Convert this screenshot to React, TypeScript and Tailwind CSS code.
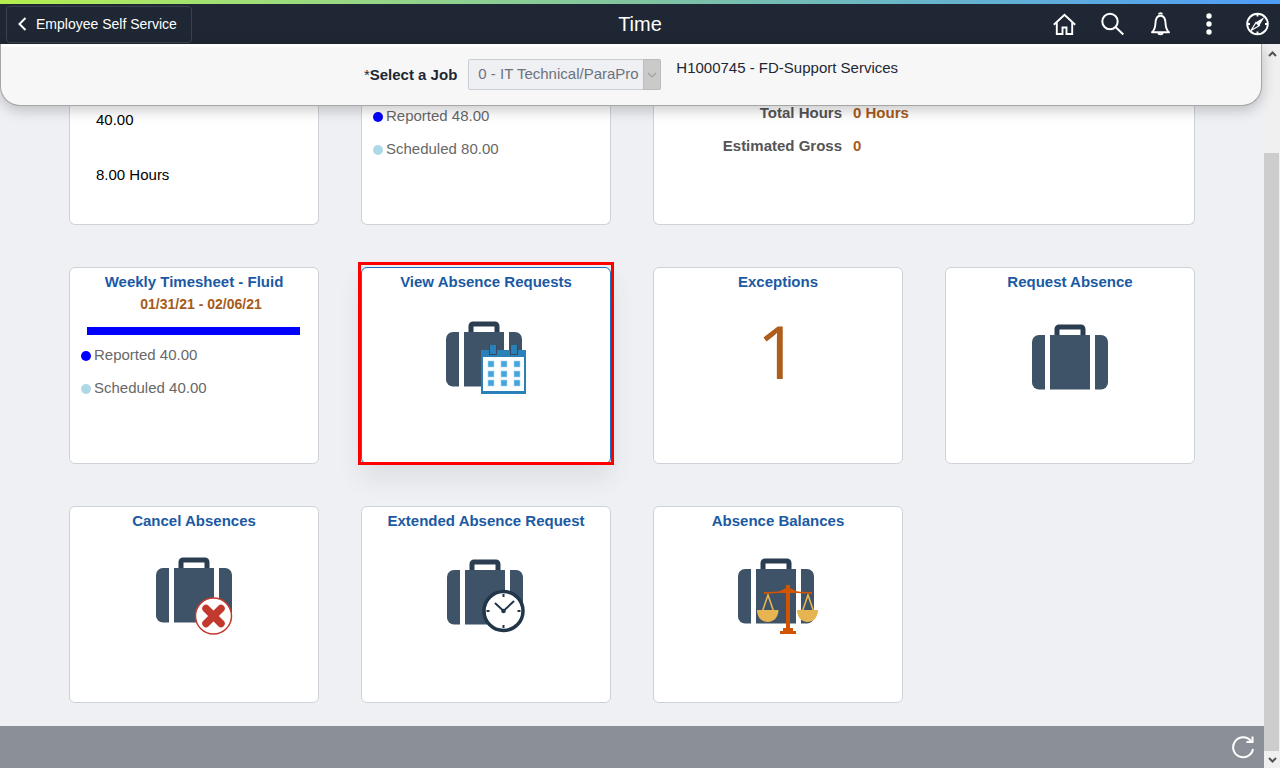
import type { ReactNode } from 'react'

function Suitcase({ width, height, children }: { width: number; height: number; children?: ReactNode }) {
  return (
    <svg width={width} height={height} viewBox={`0 0 ${width} ${height}`} fill="none" aria-hidden="true">
      <path d="M25 13V5a2 2 0 0 1 2-2h22a2 2 0 0 1 2 2v8" stroke="#2b3d50" strokeWidth="5" />
      <rect y="11" width="76" height="54.500" rx="7" fill="#3e5367" />
      <path d="M13 10h5v57h-5zM58 10h5v57h-5z" fill="#fff" />
      {children}
    </svg>
  )
}

function CalendarCase() {
  return (
    <Suitcase width={81} height={73}>
      <path d="M35 29h45v44H35z" fill="#2a80b9" />
      <path d="M37 36h41v34H37z" fill="#fff" />
      <path d="M43 24h8v10h-8zM64 24h8v10h-8z" fill="#34495e" />
      <path d="M44 24h6v9h-6zM65 24h6v9h-6z" fill="#2a80b9" />
      {[42, 55, 68].map((x) =>
        [40, 50, 59].map((y) => (
          <rect key={`${x}-${y}`} x={x} y={y} width="6" height="6" fill="#45a6de" stroke="#a8d8f2" strokeWidth="0.6" />
        )),
      )}
    </Suitcase>
  )
}

function CancelCase() {
  return (
    <Suitcase width={77} height={78}>
      <circle cx="57.500" cy="59" r="18" fill="#fff" stroke="#c23a2e" strokeWidth="1.5" />
      <path d="M50 51.500l15 15M65 51.500l-15 15" stroke="#c23a2e" strokeWidth="7.500" strokeLinecap="round" />
    </Suitcase>
  )
}

function ClockCase() {
  return (
    <Suitcase width={78} height={74}>
      <circle cx="56.5" cy="52" r="19.5" fill="#fff" stroke="#22364a" strokeWidth="3.5" />
      <path d="M56.5 35v3M56.5 66v3M39.5 52h3M70.5 52h3" stroke="#22364a" strokeWidth="2" />
      <path d="M48.5 44.5l8 7.5 10-9.5" stroke="#22364a" strokeWidth="2" strokeLinecap="round" />
      <circle cx="56.5" cy="52" r="2.3" fill="#22364a" />
    </Suitcase>
  )
}

function ScalesCase() {
  return (
    <Suitcase width={81} height={76}>
      <path d="M24.5 53L30 37l5.500 16M64.500 53L70 37l5.500 16" stroke="#e6b450" strokeWidth="1.600" />
      <path d="M19 52h21.500c0 7-4.500 12-10.750 12S19 59 19 52zM59 52h21c0 7-4.500 12-10.500 12S59 59 59 52z" fill="#e6b450" />
      <path d="M26 34c8 0 16 0 19-2.500L48 30v-3h4v3l3 1.500C58 34 66 34 74 34v2c-8-1-14-1-22-1v35h3v3h3v3H42v-3h3v-3h3V35c-8 0-14 0-22 1z" fill="#d35400" />
    </Suitcase>
  )
}

const stroke = { fill: 'none', stroke: '#fff', strokeWidth: 1.9 }

const toolbar = [
  {
    label: 'Home',
    icon: (
      <g {...stroke}>
        <path d="M.8 12.800L11.500 2.700 22.200 12.800" />
        <path d="M3.800 10.500V22h5.700v-6.500h4V22h5.700V10.500" />
      </g>
    ),
  },
  {
    label: 'Search',
    icon: (
      <g {...stroke} strokeWidth="2">
        <circle cx="9" cy="9.500" r="7.700" />
        <path d="M14.500 15l7.800 7.500" />
      </g>
    ),
  },
  {
    label: 'Notifications',
    icon: (
      <g {...stroke}>
        <path d="M3 20.300c2.500-2.300 3.200-4 3.400-8.300C6.500 6.500 8.500 3.700 11.500 3.700S16.500 6.500 16.600 12c.2 4.300.9 6 3.400 8.300z" strokeLinejoin="round" />
        <path d="M10 2.500a1.500 1.300 0 0 1 3 0M9.500 21a2 1.300 0 0 0 4 0" />
      </g>
    ),
  },
  {
    label: 'Actions',
    icon: (
      <g fill="#fff">
        <circle cx="12" cy="4" r="2.700" />
        <circle cx="12" cy="12" r="2.700" />
        <circle cx="12" cy="20" r="2.700" />
      </g>
    ),
  },
  {
    label: 'NavBar',
    icon: (
      <g {...stroke}>
        <circle cx="12.500" cy="12" r="10.300" />
        <path d="M12.500 2v2.500M12.500 19.500V22M2.500 12H5M20 12h2.500" />
        <path d="M19.500 5l-5.200 8.800L11 10.300z" fill="#fff" stroke="none" />
        <path d="M6 18.500l5-8 3.200 3.200z" strokeWidth="1.300" />
      </g>
    ),
  },
]

function Legend({ items }: { items: { label: string; dot: string }[] }) {
  return (
    <ul className="flex flex-col gap-[13px] pl-[11px] text-[#686868]">
      {items.map((item) => (
        <li key={item.label} className="flex items-center gap-[3px] leading-5">
          <span className={`mt-0.5 size-2.5 rounded-full ${item.dot}`} />
          {item.label}
        </li>
      ))}
    </ul>
  )
}

function Tile({ title, active = false, children }: { title: string; active?: boolean; children: ReactNode }) {
  return (
    <section
      className={`relative h-[197px] rounded-md border bg-white ${
        active ? 'border-[#1f6fc0] shadow-[0_14px_24px_rgba(60,70,80,0.1)]' : 'border-[#ced2d9]'
      }`}
    >
      <h2 className="text-center leading-7 font-bold text-[#1b5aa3]">
        <a href="#">{title}</a>
      </h2>
      {children}
      {active && <div className="pointer-events-none absolute -inset-x-1 -top-1.5 -bottom-0.5 border-3 border-[#ff0000]" />}
    </section>
  )
}

function TileBody({ children }: { children: ReactNode }) {
  return <div className="flex h-[122px] items-center justify-center">{children}</div>
}

function Header() {
  return (
    <header>
      <div className="h-1 bg-linear-to-r from-[#b4ee4c] via-[#80c4a0] to-[#4f9cf8]" />
      <div className="grid h-10 grid-cols-[1fr_auto_1fr] items-center bg-[#1e2733] text-white">
        <button className="ml-1.5 flex h-[37px] items-center gap-2 justify-self-start rounded-sm border border-[#3a434f] pr-3.5 pl-2.5 text-sm">
          <svg width="11" height="16" viewBox="0 0 11 16" fill="none" aria-hidden="true">
            <path d="M8.500 2L2.500 8l6 6" stroke="#fff" strokeWidth="2" />
          </svg>
          Employee Self Service
        </button>
        <h1 className="text-xl">Time</h1>
        <nav className="flex gap-6 justify-self-end pr-[11px]">
          {toolbar.map((item) => (
            <button key={item.label} aria-label={item.label}>
              <svg className="size-6" viewBox="0 0 24 24">
                {item.icon}
              </svg>
            </button>
          ))}
        </nav>
      </div>
    </header>
  )
}

function JobBar() {
  return (
    <div className="relative z-10 mr-0.5 flex h-[62px] items-start justify-center rounded-b-[20px] border border-t-0 border-[#a5a5a5] bg-[#f7f7f7] pt-[15px] text-[#1e2733] shadow-[inset_0_3px_0_#fff,0_4px_14px_rgba(0,0,0,0.22)]">
      <label htmlFor="job" className="leading-8">
        *<span className="font-bold">Select a Job</span>
      </label>
      <div className="relative ml-[11px]">
        <select
          id="job"
          disabled
          className="h-[31px] w-[193px] appearance-none rounded-xs border border-[#caced5] bg-[#eff0f4] pl-[9px] text-[#6c737c] opacity-100"
        >
          <option>0 - IT Technical/ParaPro</option>
        </select>
        <span className="pointer-events-none absolute inset-y-0 right-0 flex h-[31px] w-[18px] items-center justify-center rounded-r-xs border border-[#bcbcbc] bg-[#cacaca]">
          <svg width="10" height="6" viewBox="0 0 10 6" fill="none" aria-hidden="true">
            <path d="M1 1l4 4 4-4" stroke="#a0a0a0" strokeWidth="1.200" />
          </svg>
        </span>
      </div>
      <p className="ml-[15px] leading-[18px]">H1000745 - FD-Support Services</p>
    </div>
  )
}

const cutTile = 'h-[119px] rounded-b-md border border-t-0 border-[#ced2d9] bg-white'

export default function App() {
  return (
    <div className="flex min-h-screen flex-col bg-[#eff0f4] font-['Liberation_Sans',Arial,sans-serif] text-[15px]">
      <Header />
      <div className="flex flex-1">
        <div className="flex flex-1 flex-col">
          <JobBar />
          <main className="grid grid-cols-4 gap-[42px] px-[69px] pb-[23px]">
            <section className={`flex flex-col gap-[35px] pt-1 pl-[26px] leading-5 text-black ${cutTile}`}>
              <p>40.00</p>
              <p>8.00 Hours</p>
            </section>
            <section className={cutTile}>
              <Legend
                items={[
                  { label: 'Reported 48.00', dot: 'bg-[#0000ff]' },
                  { label: 'Scheduled 80.00', dot: 'bg-[#add8e6]' },
                ]}
              />
            </section>
            <section className={`col-span-2 ${cutTile}`}>
              <dl className="grid grid-cols-[188px_1fr] gap-x-[11px] gap-y-[19px] leading-[14px] font-bold text-[#555555]">
                <dt className="text-right">Total Hours</dt>
                <dd className="text-[#a65b1b]">0 Hours</dd>
                <dt className="text-right">Estimated Gross</dt>
                <dd className="text-[#a65b1b]">0</dd>
              </dl>
            </section>

            <Tile title="Weekly Timesheet - Fluid">
              <p className="pl-3.5 text-center text-sm leading-4 font-bold text-[#a65b1b]">01/31/21 - 02/06/21</p>
              <div className="mr-[18px] mb-2.5 ml-[17px] mt-[15px] h-2 bg-[#0000ff]" />
              <Legend
                items={[
                  { label: 'Reported 40.00', dot: 'bg-[#0000ff]' },
                  { label: 'Scheduled 40.00', dot: 'bg-[#add8e6]' },
                ]}
              />
            </Tile>
            <Tile title="View Absence Requests" active>
              <TileBody>
                <CalendarCase />
              </TileBody>
            </Tile>
            <Tile title="Exceptions">
              <TileBody>
                <span className="pb-3 font-['Open_Sans',sans-serif] text-[74px] leading-none text-[#ad5d1c]">1</span>
              </TileBody>
            </Tile>
            <Tile title="Request Absence">
              <TileBody>
                <Suitcase width={76} height={66} />
              </TileBody>
            </Tile>
            <Tile title="Cancel Absences">
              <TileBody>
                <CancelCase />
              </TileBody>
            </Tile>
            <Tile title="Extended Absence Request">
              <TileBody>
                <ClockCase />
              </TileBody>
            </Tile>
            <Tile title="Absence Balances">
              <TileBody>
                <ScalesCase />
              </TileBody>
            </Tile>
          </main>
          <footer className="mt-auto flex h-[42px] items-center justify-end bg-[#8b9098] pr-[9px]">
            <button aria-label="Refresh">
              <svg width="24" height="24" viewBox="0 0 24 24" fill="none">
                <path d="M20 6A10 10 0 1 0 22 14" stroke="#fff" strokeWidth="2" />
                <path d="M21.500 1.500v5.500h-6" stroke="#fff" strokeWidth="2" />
              </svg>
            </button>
          </footer>
        </div>

        <div className="flex w-4 flex-col bg-[#f0f0f0]" aria-hidden="true">
          <div className="flex h-[109px] justify-center pt-1.5">
            <svg width="9" height="8" viewBox="0 0 9 8" fill="none">
              <path d="M1 6l3.500-3.500L8 6" stroke="#555" strokeWidth="2" />
            </svg>
          </div>
          <div className="mr-px flex-1 bg-[#cdcdcd]" />
          <div className="flex h-[17px] items-center justify-center">
            <svg width="9" height="8" viewBox="0 0 9 8" fill="none">
              <path d="M1 2l3.500 3.500L8 2" stroke="#555" strokeWidth="2" />
            </svg>
          </div>
        </div>
      </div>
    </div>
  )
}
